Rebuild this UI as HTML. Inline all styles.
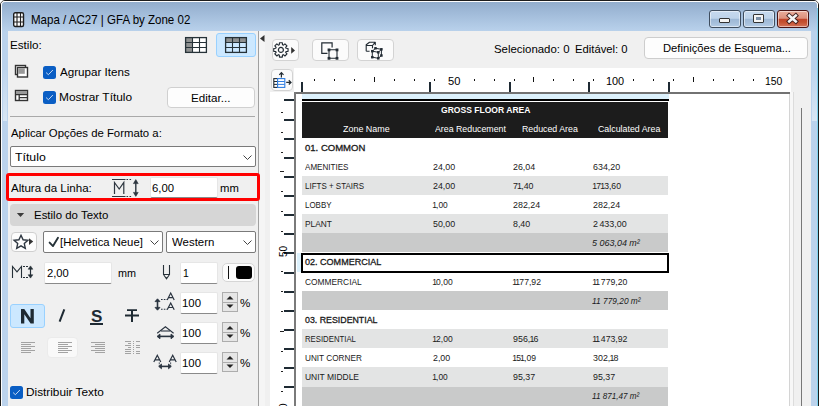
<!DOCTYPE html>
<html><head><meta charset="utf-8"><title>Mapa</title>
<style>
*{margin:0;padding:0;box-sizing:border-box}
html,body{width:819px;height:406px;overflow:hidden;background:#fff}
body{font-family:"Liberation Sans",sans-serif;position:relative}
.a{position:absolute}
.t{position:absolute;white-space:nowrap;line-height:1}
svg{overflow:visible}
</style></head><body>
<div class="a" style="left:0;top:0;width:819px;height:406px;background:#fff"></div>
<div class="a" style="left:0;top:0;width:819px;height:420px;border:1px solid #1c1c1c;border-radius:5px 5px 0 0;background:#fff;"></div>
<div class="a" style="left:1px;top:1px;width:817px;height:420px;border-radius:4px 4px 0 0;padding:1px 1px 0 1px;background:#fdfdfd"><div style="width:100%;height:100%;border-radius:3px 3px 0 0;background:linear-gradient(#92adcc 0px,#a2bcda 12px,#b2cbe6 24px,#bad2ec 30px,#bcd3ec)"></div></div>
<div class="a" style="left:812px;top:70px;width:5px;height:51px;background:linear-gradient(#bfd5ed,#d8e6f4)"></div>
<div class="a" style="left:3px;top:70px;width:4px;height:51px;background:linear-gradient(#bfd5ed,#d8e6f4)"></div>
<div class="a" style="left:817px;top:8px;width:1px;height:398px;background:#7fd3ef"></div>
<svg class="a" style="left:13px;top:12px" width="11" height="15" viewBox="0 0 11 15"><rect x="0.7" y="0.7" width="9.8" height="13.8" rx="1.5" fill="#fff" stroke="#1e1e1e" stroke-width="1.4"/><path d="M4 1v13M7.5 1v13M1 5h9M1 10h9" stroke="#1e1e1e" stroke-width="1.1"/></svg>
<div class="t" style="left:30.5px;top:12.86px;font-size:13.4px;color:#000;font-weight:normal;transform:scaleX(0.8606);transform-origin:0 0;">Mapa / AC27 | GFA by Zone 02</div>
<div class="a" style="left:709px;top:10px;width:32px;height:18px;border:1px solid #3f4d5e;border-radius:3px;background:linear-gradient(#c6d9ee,#bed3ea 46%,#9db8d6 50%,#a6bfdb 75%,#b6cde7);box-shadow:inset 0 0 0 1px rgba(255,255,255,.5)"></div>
<div class="a" style="left:743px;top:10px;width:32px;height:18px;border:1px solid #3f4d5e;border-radius:3px;background:linear-gradient(#c6d9ee,#bed3ea 46%,#9db8d6 50%,#a6bfdb 75%,#b6cde7);box-shadow:inset 0 0 0 1px rgba(255,255,255,.5)"></div>
<div class="a" style="left:777px;top:10px;width:32px;height:18px;border:1px solid #4a1414;border-radius:3px;background:linear-gradient(#e9ad9c,#dc907c 46%,#c0442a 50%,#c4502f 70%,#d4735a);box-shadow:inset 0 0 0 1px rgba(255,255,255,.5)"></div>
<div class="a" style="left:719px;top:18px;width:11px;height:5px;background:#f4f4f4;border:1px solid #333;border-radius:1px"></div>
<div class="a" style="left:753px;top:14px;width:11px;height:9px;background:#f4f4f4;border:1px solid #333;border-radius:1px"></div>
<div class="a" style="left:756px;top:17px;width:5px;height:3px;background:#7c90a8"></div>
<svg class="a" style="left:786px;top:13px" width="13" height="11" viewBox="0 0 13 11"><path d="M3.2 2.6L9.8 8.4M9.8 2.6L3.2 8.4" stroke="#3a1a1a" stroke-width="4.4" stroke-linecap="square"/><path d="M3.2 2.6L9.8 8.4M9.8 2.6L3.2 8.4" stroke="#f4f4f4" stroke-width="2.6" stroke-linecap="square"/></svg>
<div class="a" style="left:8px;top:31px;width:803px;height:380px;background:#f0f0f0"></div>
<div class="a" style="left:258px;top:31px;width:1px;height:380px;background:#a0a0a0"></div>
<div class="a" style="left:259px;top:31px;width:6px;height:380px;background:#f5f5f5"></div>
<svg class="a" style="left:260px;top:35px" width="5" height="7" viewBox="0 0 5 7"><path d="M4.5 0V7L0 3.5Z" fill="#333"/></svg>
<div class="t" style="left:9.7px;top:39.69px;font-size:11px;color:#000;font-weight:normal;transform:scaleX(1.0611);transform-origin:0 0;">Estilo:</div>
<svg class="a" style="left:185px;top:37px" width="22" height="16" viewBox="0 0 22 16"><rect x="0.5" y="0.5" width="21" height="15" fill="#fff"/><rect x="1" y="1" width="6.5" height="14" fill="#8f9191"/><path d="M7.5 1v14M14.5 1v14M1 5.5h20M1 10.5h20" stroke="#263238" stroke-width="1.1"/><rect x="0.6" y="0.6" width="20.8" height="14.8" fill="none" stroke="#263238" stroke-width="1.3"/></svg>
<div class="a" style="left:216px;top:33px;width:40px;height:24px;background:#cce8ff;border:1px solid #99d1ff;border-radius:3px"></div>
<svg class="a" style="left:225px;top:37px" width="22" height="16" viewBox="0 0 22 16"><rect x="0.5" y="0.5" width="21" height="15" fill="#cce8ff"/><rect x="1" y="1" width="20" height="4.5" fill="#8f9191"/><path d="M7.5 1v14M14.5 1v14M1 5.5h20M1 10.5h20" stroke="#263238" stroke-width="1.1"/><rect x="0.6" y="0.6" width="20.8" height="14.8" fill="none" stroke="#263238" stroke-width="1.3"/></svg>
<svg class="a" style="left:14px;top:64px" width="15" height="15" viewBox="0 0 15 15"><rect x="1.5" y="1.5" width="10" height="9" fill="#fff" stroke="#333" stroke-width="1.4"/><rect x="3.5" y="3.5" width="10" height="9.5" fill="#fff" stroke="#333" stroke-width="1.4"/><rect x="4.2" y="4.2" width="6.6" height="5.6" fill="#999"/></svg>
<svg class="a" style="left:14px;top:89px" width="15" height="13" viewBox="0 0 15 13"><rect x="1.5" y="1.5" width="12" height="10" fill="#fff" stroke="#333" stroke-width="1.4"/><rect x="2" y="2" width="11" height="3.4" fill="#999"/><path d="M1 5.6h13M5.2 6v5.5M5.2 8.6h8.5" stroke="#333" stroke-width="1.3"/></svg>
<svg class="a" style="left:43px;top:66px" width="13" height="13" viewBox="0 0 13 13"><rect x="0" y="0" width="13" height="13" rx="2.5" fill="#0a5ec4"/><path d="M3.1 6.6L5.4 8.7L9.9 4" fill="none" stroke="#e4ecf8" stroke-width="0.85"/></svg>
<div class="t" style="left:59.5px;top:66.99px;font-size:11px;color:#000;font-weight:normal;transform:scaleX(1.0568);transform-origin:0 0;">Agrupar Itens</div>
<svg class="a" style="left:43px;top:91px" width="13" height="13" viewBox="0 0 13 13"><rect x="0" y="0" width="13" height="13" rx="2.5" fill="#0a5ec4"/><path d="M3.1 6.6L5.4 8.7L9.9 4" fill="none" stroke="#e4ecf8" stroke-width="0.85"/></svg>
<div class="t" style="left:59.2px;top:91.99px;font-size:11px;color:#000;font-weight:normal;transform:scaleX(1.0805);transform-origin:0 0;">Mostrar Título</div>
<div class="a" style="left:167px;top:87px;width:88px;height:21px;background:#fdfdfd;border:1px solid #d0d0d0;border-radius:4px"></div>
<div class="t" style="left:190.8px;top:92.69px;font-size:11px;color:#000;font-weight:normal;transform:scaleX(1.0564);transform-origin:0 0;">Editar...</div>
<div class="a" style="left:10px;top:116px;width:245px;height:1px;background:#a9a9a9"></div>
<div class="t" style="left:10.5px;top:127.69px;font-size:11px;color:#000;font-weight:normal;transform:scaleX(1.0320);transform-origin:0 0;">Aplicar Opções de Formato a:</div>
<div class="a" style="left:10px;top:146px;width:246px;height:21px;background:#fff;border:1px solid #7a7a7a;border-radius:2px"></div>
<svg class="a" style="left:243px;top:155px" width="9" height="5" viewBox="0 0 9 5"><path d="M0.5 0.5L4.5 4.5L8.5 0.5" fill="none" stroke="#444" stroke-width="1"/></svg>
<div class="t" style="left:15px;top:151.99px;font-size:11px;color:#000;font-weight:normal;transform:scaleX(1.1194);transform-origin:0 0;">Título</div>
<div class="a" style="left:6px;top:173px;width:254px;height:28px;border:3px solid #f00;border-radius:3px"></div>
<div class="t" style="left:10.5px;top:182.69px;font-size:11px;color:#000;font-weight:normal;transform:scaleX(1.0485);transform-origin:0 0;">Altura da Linha:</div>
<svg class="a" style="left:111px;top:178px" width="28" height="20" viewBox="0 0 28 20"><path d="M1 1.5h13.5M1 18.5h13.5" stroke="#2d3640" stroke-width="1"/><path d="M15.5 1.5h6M15.5 18.5h6" stroke="#2d3640" stroke-width="1" stroke-dasharray="1.6 1.4"/><path d="M3.5 16V4.5L8.2 11L12.8 4.5V16" fill="none" stroke="#2d3640" stroke-width="1.2"/><path d="M24.8 4V16" stroke="#2d3640" stroke-width="1.4"/><path d="M22.4 5.6L24.8 1.6L27.2 5.6ZM22.4 14.4L24.8 18.4L27.2 14.4Z" fill="#2d3640" stroke="#2d3640" stroke-width="0.6" stroke-linejoin="round"/></svg>
<div class="a" style="left:150px;top:177px;width:68px;height:21px;background:#fff;border:1px solid #e6e6e6;border-bottom:1px solid #8a8a8a;border-radius:2px"></div>
<div class="t" style="left:151.8px;top:182.69px;font-size:11px;color:#000;font-weight:normal;transform:scaleX(1.0317);transform-origin:0 0;">6,00</div>
<div class="t" style="left:220px;top:182.69px;font-size:11px;color:#000;font-weight:normal;transform:scaleX(1.0257);transform-origin:0 0;">mm</div>
<div class="a" style="left:10px;top:204px;width:246px;height:22px;background:#d6d6d6;border-radius:4px"></div>
<svg class="a" style="left:16px;top:212px" width="9" height="6" viewBox="0 0 9 6"><path d="M0.8 1H8.2L4.5 5Z" fill="#3c3c3c"/></svg>
<div class="t" style="left:33.8px;top:210.39px;font-size:11px;color:#000;font-weight:normal;transform:scaleX(1.0414);transform-origin:0 0;">Estilo do Texto</div>
<div class="a" style="left:11px;top:232px;width:26px;height:20px;background:#fcfcfc;border:1px solid #cfcfcf;border-radius:4px"></div>
<svg class="a" style="left:13px;top:234px" width="22" height="16" viewBox="0 0 22 16"><path d="M8 1.3L10.1 5.8L14.9 6.3L11.3 9.6L12.3 14.4L8 11.9L3.7 14.4L4.7 9.6L1.1 6.3L5.9 5.8Z" fill="none" stroke="#2d3640" stroke-width="1.4" stroke-linejoin="miter"/><path d="M16 4.2L20.2 7.6L16 11Z" fill="#333"/></svg>
<div class="a" style="left:43px;top:231px;width:120px;height:22px;background:#fff;border:1px solid #7a7a7a;border-radius:2px"></div>
<svg class="a" style="left:150px;top:240px" width="9" height="5" viewBox="0 0 9 5"><path d="M0.5 0.5L4.5 4.5L8.5 0.5" fill="none" stroke="#444" stroke-width="1"/></svg>
<svg class="a" style="left:48px;top:237px" width="11" height="11" viewBox="0 0 11 11"><path d="M1.6 5.6L5 9.1L10 0.8" fill="none" stroke="#263238" stroke-width="1.9" stroke-linecap="round" stroke-linejoin="round"/></svg>
<div class="t" style="left:59.8px;top:237.29px;font-size:11px;color:#000;font-weight:normal;transform:scaleX(1.0258);transform-origin:0 0;">[Helvetica Neue]</div>
<div class="a" style="left:166px;top:231px;width:90px;height:22px;background:#fff;border:1px solid #7a7a7a;border-radius:2px"></div>
<svg class="a" style="left:243px;top:240px" width="9" height="5" viewBox="0 0 9 5"><path d="M0.5 0.5L4.5 4.5L8.5 0.5" fill="none" stroke="#444" stroke-width="1"/></svg>
<div class="t" style="left:171.6px;top:237.19px;font-size:11px;color:#000;font-weight:normal;transform:scaleX(1.0401);transform-origin:0 0;">Western</div>
<svg class="a" style="left:11px;top:264px" width="24" height="16" viewBox="0 0 24 16"><path d="M1.5 14V2.4L6 7.8L10.5 2.4V14" fill="none" stroke="#263038" stroke-width="1.1"/><path d="M12 2.5h5M12 13.5h5" stroke="#263038" stroke-width="1" stroke-dasharray="2 1"/><path d="M19.5 4.5V11.5" stroke="#263038" stroke-width="1.2"/><path d="M17.2 5.2L19.5 1.9L21.8 5.2ZM17.2 10.8L19.5 14.1L21.8 10.8Z" fill="#263038" stroke="#263038" stroke-width="0.6" stroke-linejoin="round"/></svg>
<div class="a" style="left:44px;top:262px;width:68px;height:22px;background:#fff;border:1px solid #e6e6e6;border-bottom:1px solid #8a8a8a;border-radius:2px"></div>
<div class="t" style="left:46.8px;top:267.89px;font-size:11px;color:#000;font-weight:normal;transform:scaleX(1.0177);transform-origin:0 0;">2,00</div>
<div class="t" style="left:117.8px;top:267.89px;font-size:11px;color:#000;font-weight:normal;transform:scaleX(0.9821);transform-origin:0 0;">mm</div>
<svg class="a" style="left:162px;top:264px" width="10" height="16" viewBox="0 0 10 16"><path d="M1.5 1V10.5M7.5 1V10.5M1 10.5H8" fill="none" stroke="#263038" stroke-width="1.1"/><path d="M1.8 11L4.5 14.8L7.2 11" fill="none" stroke="#263038" stroke-width="1.1"/><path d="M3.6 13.2L4.5 14.8L5.4 13.2Z" fill="#263038"/></svg>
<div class="a" style="left:180px;top:262px;width:38px;height:22px;background:#fff;border:1px solid #e6e6e6;border-bottom:1px solid #8a8a8a;border-radius:2px"></div>
<div class="t" style="left:182.6px;top:267.89px;font-size:11px;color:#000;font-weight:normal;transform:scaleX(0.9469);transform-origin:0 0;">1</div>
<div class="a" style="left:222px;top:263px;width:33px;height:19px;background:#fcfcfc;border:1px solid #d6d6d6;border-radius:5px"></div>
<div class="a" style="left:228px;top:266px;width:1px;height:13px;background:#111"></div>
<div class="a" style="left:236px;top:266px;width:16px;height:13px;background:#000;border-radius:3px"></div>
<div class="a" style="left:10px;top:304px;width:35px;height:24px;background:#cce8ff;border:1px solid #99d1ff;border-radius:3px"></div>
<svg class="a" style="left:20.8px;top:308.5px" width="13" height="15" viewBox="0 0 13 15"><path d="M0 14.5V0H3.3L9.5 9.3V0H12.8V14.5H9.6L3.3 5.2V14.5Z" fill="#1e2a33"/></svg>
<svg class="a" style="left:58px;top:309px" width="8" height="13" viewBox="0 0 8 13"><path d="M6.3 0.3L1.6 12.7" stroke="#1e2a33" stroke-width="2"/></svg>
<div class="t" style="left:90.6px;top:307.63px;font-size:16.5px;color:#1e2a33;font-weight:bold;transform:scaleX(1.0349);transform-origin:0 0;">S</div>
<div class="a" style="left:90px;top:323px;width:13px;height:1.6px;background:#1e2a33"></div>
<svg class="a" style="left:124px;top:308px" width="16" height="15" viewBox="0 0 16 15"><path d="M1 7.5h14M3 2.2h10" stroke="#1e2a33" stroke-width="1.8"/><path d="M8 2V14" stroke="#1e2a33" stroke-width="2"/></svg>
<div class="a" style="left:21px;top:342px;width:14px;height:1px;background:#a3a3a3"></div>
<div class="a" style="left:21px;top:344px;width:10px;height:1px;background:#a3a3a3"></div>
<div class="a" style="left:21px;top:346px;width:14px;height:1px;background:#a3a3a3"></div>
<div class="a" style="left:21px;top:348px;width:10px;height:1px;background:#a3a3a3"></div>
<div class="a" style="left:21px;top:350px;width:14px;height:1px;background:#a3a3a3"></div>
<div class="a" style="left:21px;top:352px;width:10px;height:1px;background:#a3a3a3"></div>
<div class="a" style="left:47px;top:337px;width:31px;height:21px;background:#f9f9f9;border:1px solid #ebebeb;border-radius:4px"></div>
<div class="a" style="left:58px;top:342px;width:14px;height:1px;background:#a3a3a3"></div>
<div class="a" style="left:58px;top:344px;width:10px;height:1px;background:#a3a3a3"></div>
<div class="a" style="left:58px;top:346px;width:14px;height:1px;background:#a3a3a3"></div>
<div class="a" style="left:58px;top:348px;width:10px;height:1px;background:#a3a3a3"></div>
<div class="a" style="left:58px;top:350px;width:14px;height:1px;background:#a3a3a3"></div>
<div class="a" style="left:58px;top:352px;width:10px;height:1px;background:#a3a3a3"></div>
<div class="a" style="left:91px;top:342px;width:14px;height:1px;background:#a3a3a3"></div>
<div class="a" style="left:95px;top:344px;width:10px;height:1px;background:#a3a3a3"></div>
<div class="a" style="left:91px;top:346px;width:14px;height:1px;background:#a3a3a3"></div>
<div class="a" style="left:95px;top:348px;width:10px;height:1px;background:#a3a3a3"></div>
<div class="a" style="left:91px;top:350px;width:14px;height:1px;background:#a3a3a3"></div>
<div class="a" style="left:95px;top:352px;width:10px;height:1px;background:#a3a3a3"></div>
<div class="a" style="left:125px;top:341px;width:6px;height:1px;background:#a3a3a3"></div>
<div class="a" style="left:133px;top:341px;width:1px;height:1px;background:#a3a3a3"></div>
<div class="a" style="left:136px;top:341px;width:4px;height:1px;background:#a3a3a3"></div>
<div class="a" style="left:128px;top:343px;width:3px;height:1px;background:#a3a3a3"></div>
<div class="a" style="left:133px;top:343px;width:1px;height:1px;background:#a3a3a3"></div>
<div class="a" style="left:125px;top:345px;width:6px;height:1px;background:#a3a3a3"></div>
<div class="a" style="left:133px;top:345px;width:1px;height:1px;background:#a3a3a3"></div>
<div class="a" style="left:136px;top:345px;width:4px;height:1px;background:#a3a3a3"></div>
<div class="a" style="left:128px;top:347px;width:3px;height:1px;background:#a3a3a3"></div>
<div class="a" style="left:133px;top:347px;width:1px;height:1px;background:#a3a3a3"></div>
<div class="a" style="left:136px;top:347px;width:4px;height:1px;background:#a3a3a3"></div>
<div class="a" style="left:125px;top:349px;width:6px;height:1px;background:#a3a3a3"></div>
<div class="a" style="left:133px;top:349px;width:1px;height:1px;background:#a3a3a3"></div>
<div class="a" style="left:125px;top:351px;width:6px;height:1px;background:#a3a3a3"></div>
<div class="a" style="left:133px;top:351px;width:1px;height:1px;background:#a3a3a3"></div>
<div class="a" style="left:136px;top:351px;width:4px;height:1px;background:#a3a3a3"></div>
<div class="a" style="left:125px;top:353px;width:6px;height:1px;background:#a3a3a3"></div>
<div class="a" style="left:133px;top:353px;width:1px;height:1px;background:#a3a3a3"></div>
<div class="a" style="left:136px;top:353px;width:4px;height:1px;background:#a3a3a3"></div>
<div class="a" style="left:180px;top:292px;width:38px;height:22px;background:#fff;border:1px solid #e6e6e6;border-bottom:1px solid #8a8a8a;border-radius:2px"></div>
<div class="t" style="left:182.3px;top:298.19px;font-size:11px;color:#000;font-weight:normal;transform:scaleX(1.0349);transform-origin:0 0;">100</div>
<div class="a" style="left:222px;top:292px;width:16px;height:20px;background:#e6e6e6;border:1px solid #adadad"></div>
<div class="a" style="left:223px;top:301.5px;width:14px;height:1px;background:#adadad"></div>
<svg class="a" style="left:226px;top:295px" width="8" height="14" viewBox="0 0 8 14"><path d="M0.5 4.5L4 1L7.5 4.5Z" fill="#222"/><path d="M0.5 9.5L4 13L7.5 9.5Z" fill="#222"/></svg>
<div class="t" style="left:239.5px;top:298.19px;font-size:11px;color:#000;font-weight:normal;transform:scaleX(1.0530);transform-origin:0 0;">%</div>
<div class="a" style="left:180px;top:322px;width:38px;height:22px;background:#fff;border:1px solid #e6e6e6;border-bottom:1px solid #8a8a8a;border-radius:2px"></div>
<div class="t" style="left:182.3px;top:328.19px;font-size:11px;color:#000;font-weight:normal;transform:scaleX(1.0349);transform-origin:0 0;">100</div>
<div class="a" style="left:222px;top:322px;width:16px;height:20px;background:#e6e6e6;border:1px solid #adadad"></div>
<div class="a" style="left:223px;top:331.5px;width:14px;height:1px;background:#adadad"></div>
<svg class="a" style="left:226px;top:325px" width="8" height="14" viewBox="0 0 8 14"><path d="M0.5 4.5L4 1L7.5 4.5Z" fill="#222"/><path d="M0.5 9.5L4 13L7.5 9.5Z" fill="#222"/></svg>
<div class="t" style="left:239.5px;top:328.19px;font-size:11px;color:#000;font-weight:normal;transform:scaleX(1.0530);transform-origin:0 0;">%</div>
<div class="a" style="left:180px;top:352px;width:38px;height:22px;background:#fff;border:1px solid #e6e6e6;border-bottom:1px solid #8a8a8a;border-radius:2px"></div>
<div class="t" style="left:182.3px;top:358.19px;font-size:11px;color:#000;font-weight:normal;transform:scaleX(1.0349);transform-origin:0 0;">100</div>
<div class="a" style="left:222px;top:352px;width:16px;height:20px;background:#e6e6e6;border:1px solid #adadad"></div>
<div class="a" style="left:223px;top:361.5px;width:14px;height:1px;background:#adadad"></div>
<svg class="a" style="left:226px;top:355px" width="8" height="14" viewBox="0 0 8 14"><path d="M0.5 4.5L4 1L7.5 4.5Z" fill="#222"/><path d="M0.5 9.5L4 13L7.5 9.5Z" fill="#222"/></svg>
<div class="t" style="left:239.5px;top:358.19px;font-size:11px;color:#000;font-weight:normal;transform:scaleX(1.0530);transform-origin:0 0;">%</div>
<svg class="a" style="left:150px;top:288px" width="30" height="26" viewBox="0 0 30 26"><path d="M7.5 12.2V20.8" stroke="#2a3440" stroke-width="1.6"/><path d="M5 13.6L7.5 10.8L10 13.6ZM5 19.4L7.5 22.2L10 19.4Z" fill="#2a3440" stroke="#2a3440" stroke-width="0.8"/><path d="M11 11.5h6M11 21.3h6" stroke="#2a3440" stroke-width="1.1" stroke-dasharray="1.6 1.2"/><path d="M17.2 11.899999999999999L20.7 5.1L24.2 11.899999999999999M18.599999999999998 9.6H22.799999999999997" fill="none" stroke="#2a3440" stroke-width="1.2"/><path d="M17.2 21.8L20.7 15L24.2 21.8M18.599999999999998 19.5H22.799999999999997" fill="none" stroke="#2a3440" stroke-width="1.2"/></svg>
<svg class="a" style="left:150px;top:320px" width="30" height="24" viewBox="0 0 30 24"><path d="M7.2 13.3L15.4 6.8L23.6 13.3" fill="none" stroke="#2a3440" stroke-width="1.1"/><path d="M11 11h9" stroke="#2a3440" stroke-width="1.1"/><path d="M8.5 16.4H22.5" stroke="#2a3440" stroke-width="1.6"/><path d="M10 14L7 16.4L10 18.8ZM21 14L24 16.4L21 18.8Z" fill="#2a3440" stroke="#2a3440" stroke-width="0.8"/></svg>
<svg class="a" style="left:150px;top:350px" width="30" height="22" viewBox="0 0 30 22"><path d="M3.8 12.1L7.3 5.3L10.8 12.1M5.199999999999999 9.8H9.399999999999999" fill="none" stroke="#2a3440" stroke-width="1.2"/><path d="M19.2 12.1L22.7 5.3L26.2 12.1M20.599999999999998 9.8H24.799999999999997" fill="none" stroke="#2a3440" stroke-width="1.2"/><path d="M9.3 12.5v3M20.6 12.5v3" stroke="#2a3440" stroke-width="1.1" stroke-dasharray="1.2 1"/><path d="M10 16.4H20" stroke="#2a3440" stroke-width="1.6"/><path d="M11.5 14L8.7 16.4L11.5 18.8ZM18.5 14L21.3 16.4L18.5 18.8Z" fill="#2a3440" stroke="#2a3440" stroke-width="0.8"/></svg>
<svg class="a" style="left:10px;top:386px" width="13" height="13" viewBox="0 0 13 13"><rect x="0" y="0" width="13" height="13" rx="2.5" fill="#0a5ec4"/><path d="M3.1 6.6L5.4 8.7L9.9 4" fill="none" stroke="#e4ecf8" stroke-width="0.85"/></svg>
<div class="t" style="left:26.2px;top:386.89px;font-size:11px;color:#000;font-weight:normal;transform:scaleX(1.0724);transform-origin:0 0;">Distribuir Texto</div>
<div class="a" style="left:271.5px;top:39.4px;width:27px;height:22px;background:#fbfbfb;border:1px solid #d3d3d3;border-radius:4px"></div>
<svg class="a" style="left:273px;top:42px" width="24" height="16" viewBox="0 0 24 16"><g transform="translate(7.9 7.9)"><path d="M5.16 -1.60 L7.15 -1.45 L7.15 1.45 L5.16 1.60 L4.78 2.52 L6.08 4.03 L4.03 6.08 L2.52 4.78 L1.60 5.16 L1.45 7.15 L-1.45 7.15 L-1.60 5.16 L-2.52 4.78 L-4.03 6.08 L-6.08 4.03 L-4.78 2.52 L-5.16 1.60 L-7.15 1.45 L-7.15 -1.45 L-5.16 -1.60 L-4.78 -2.52 L-6.08 -4.03 L-4.03 -6.08 L-2.52 -4.78 L-1.60 -5.16 L-1.45 -7.15 L1.45 -7.15 L1.60 -5.16 L2.52 -4.78 L4.03 -6.08 L6.08 -4.03 L4.78 -2.52Z" fill="none" stroke="#222b33" stroke-width="1.15" stroke-linejoin="round"/><circle r="2.5" fill="none" stroke="#222b33" stroke-width="1.2"/></g><path d="M18.2 5L22 8.4L18.2 11.8Z" fill="#333"/></svg>
<div class="a" style="left:311.5px;top:39.3px;width:37px;height:22px;background:#fbfbfb;border:1px solid #d3d3d3;border-radius:4px"></div>
<svg class="a" style="left:311.5px;top:39.3px" width="37" height="22" viewBox="0 0 37 22"><path d="M15.5 14.3H9.8V3.8H20.1V8.5" fill="none" stroke="#222b33" stroke-width="1.2"/><path d="M17 10.8H25M17 19.2H25M17 10.8V19.2M25 10.8V19.2" stroke="#222b33" stroke-width="1.1"/><g fill="#222b33"><rect x="15.6" y="9.5" width="2.8" height="2.8"/><rect x="23.6" y="9.5" width="2.8" height="2.8"/><rect x="15.6" y="17.9" width="2.8" height="2.8"/><rect x="23.6" y="17.9" width="2.8" height="2.8"/></g></svg>
<div class="a" style="left:357px;top:39.3px;width:36.5px;height:22px;background:#fbfbfb;border:1px solid #d3d3d3;border-radius:4px"></div>
<svg class="a" style="left:362px;top:39px" width="26" height="23" viewBox="0 0 26 23"><path d="M4.2 12.2V5.7L7.5 3.2H13.3L10.5 6.5H4.2M10.5 6.5V9.3M13.3 3.6V6.2M4.2 12.2H7.6" fill="none" stroke="#222b33" stroke-width="1.1" stroke-linejoin="round"/><path d="M10.3 12.2L16.3 13.3L19.4 10.3L13.5 9.3ZM10.3 12.2V18.2L16.3 19.3L19.4 16.5V10.3M16.3 13.3V19.3" fill="none" stroke="#222b33" stroke-width="1"/><g fill="#222b33"><rect x="12.25" y="8.05" width="2.5" height="2.5"/><rect x="18.15" y="9.05" width="2.5" height="2.5"/><rect x="9.05" y="10.95" width="2.5" height="2.5"/><rect x="15.05" y="12.05" width="2.5" height="2.5"/><rect x="18.15" y="15.25" width="2.5" height="2.5"/><rect x="9.05" y="16.95" width="2.5" height="2.5"/><rect x="15.05" y="18.05" width="2.5" height="2.5"/></g></svg>
<div class="t" style="left:494.3px;top:44.39px;font-size:11px;color:#000;font-weight:normal;transform:scaleX(1.0374);transform-origin:0 0;">Selecionado: 0</div>
<div class="t" style="left:575px;top:44.39px;font-size:11px;color:#000;font-weight:normal;transform:scaleX(1.0238);transform-origin:0 0;">Editável: 0</div>
<div class="a" style="left:644px;top:37px;width:164px;height:22px;background:#fdfdfd;border:1px solid #cdcdcd;border-radius:4px"></div>
<div class="t" style="left:662.5px;top:42.59px;font-size:11px;color:#000;font-weight:normal;transform:scaleX(1.0211);transform-origin:0 0;">Definições de Esquema...</div>
<div class="a" style="left:294px;top:68px;width:497px;height:25px;background:#fff"></div>
<div class="a" style="left:270px;top:92px;width:25px;height:320px;background:#fff"></div>
<div class="a" style="left:271.4px;top:69.2px;width:21.2px;height:21.8px;background:#fbfbfb;border:1px solid #d3d3d3;border-radius:4px"></div>
<svg class="a" style="left:268px;top:66px" width="28" height="28" viewBox="0 0 28 28"><path d="M13.4 11.5V6.8M11.3 8.8L13.4 6.6L15.5 8.8" fill="none" stroke="#222b33" stroke-width="1.2"/><rect x="5.8" y="12.6" width="4" height="8.8" fill="#fff" stroke="#222b33" stroke-width="1.1"/><path d="M6 15.5H9.6M6 18.4H9.6" stroke="#222b33" stroke-width="1"/><rect x="9.6" y="12.6" width="7.2" height="8.8" fill="#fff" stroke="#2f7de1" stroke-width="1.1"/><path d="M9.8 15.5H16.6M9.8 18.4H16.6" stroke="#2f7de1" stroke-width="1"/><path d="M18.2 16.4H22.8M20.8 14.3L23 16.4L20.8 18.5" fill="none" stroke="#222b33" stroke-width="1.2"/></svg>
<div class="a" style="left:314px;top:79px;width:1px;height:2px;background:#111"></div>
<div class="a" style="left:334px;top:79px;width:1px;height:2px;background:#111"></div>
<div class="a" style="left:354px;top:79px;width:1px;height:2px;background:#111"></div>
<div class="a" style="left:374px;top:77px;width:1px;height:5px;background:#111"></div>
<div class="a" style="left:394px;top:79px;width:1px;height:2px;background:#111"></div>
<div class="a" style="left:414px;top:79px;width:1px;height:2px;background:#111"></div>
<div class="a" style="left:434px;top:79px;width:1px;height:2px;background:#111"></div>
<div class="a" style="left:474px;top:79px;width:1px;height:2px;background:#111"></div>
<div class="a" style="left:494px;top:79px;width:1px;height:2px;background:#111"></div>
<div class="a" style="left:514px;top:79px;width:1px;height:2px;background:#111"></div>
<div class="a" style="left:533px;top:77px;width:1px;height:5px;background:#111"></div>
<div class="a" style="left:553px;top:79px;width:1px;height:2px;background:#111"></div>
<div class="a" style="left:573px;top:79px;width:1px;height:2px;background:#111"></div>
<div class="a" style="left:593px;top:79px;width:1px;height:2px;background:#111"></div>
<div class="a" style="left:633px;top:79px;width:1px;height:2px;background:#111"></div>
<div class="a" style="left:653px;top:79px;width:1px;height:2px;background:#111"></div>
<div class="a" style="left:673px;top:79px;width:1px;height:2px;background:#111"></div>
<div class="a" style="left:693px;top:77px;width:1px;height:5px;background:#111"></div>
<div class="a" style="left:713px;top:79px;width:1px;height:2px;background:#111"></div>
<div class="a" style="left:733px;top:79px;width:1px;height:2px;background:#111"></div>
<div class="a" style="left:753px;top:79px;width:1px;height:2px;background:#111"></div>
<div class="t" style="left:448.4px;top:75.91px;font-size:10.5px;color:#000;font-weight:normal;transform:scaleX(1.0610);transform-origin:0 0;">50</div>
<div class="t" style="left:605.5999999999999px;top:75.91px;font-size:10.5px;color:#000;font-weight:normal;transform:scaleX(1.0381);transform-origin:0 0;">100</div>
<div class="t" style="left:765.0px;top:75.91px;font-size:10.5px;color:#000;font-weight:normal;transform:scaleX(0.9925);transform-origin:0 0;">150</div>
<div class="a" style="left:301px;top:82px;width:2px;height:10px;background:#1e2a33"></div>
<div class="a" style="left:429px;top:82px;width:2px;height:10px;background:#1e2a33"></div>
<div class="a" style="left:509px;top:82px;width:2px;height:10px;background:#1e2a33"></div>
<div class="a" style="left:588px;top:82px;width:2px;height:10px;background:#1e2a33"></div>
<div class="a" style="left:668px;top:82px;width:2px;height:10px;background:#1e2a33"></div>
<div class="a" style="left:789px;top:92px;width:1px;height:320px;background:#d4d4d4"></div>
<div class="a" style="left:793px;top:92px;width:1px;height:320px;background:#dcdcdc"></div>
<div class="a" style="left:790px;top:92px;width:3px;height:320px;background:#f7f7f7"></div>
<div class="a" style="left:801px;top:108px;width:1px;height:300px;background:#777"></div>
<div class="a" style="left:294px;top:92px;width:496px;height:2px;background:#727272"></div>
<div class="a" style="left:296px;top:94px;width:493px;height:320px;background:#fff"></div>
<div class="a" style="left:294px;top:92px;width:2px;height:320px;background:#7a7a7a"></div>
<div class="a" style="left:284px;top:99px;width:10px;height:2px;background:#1e2a33"></div>
<div class="a" style="left:284px;top:119px;width:10px;height:2px;background:#1e2a33"></div>
<div class="a" style="left:284px;top:138px;width:10px;height:2px;background:#1e2a33"></div>
<div class="a" style="left:284px;top:157px;width:10px;height:2px;background:#1e2a33"></div>
<div class="a" style="left:284px;top:176px;width:10px;height:2px;background:#1e2a33"></div>
<div class="a" style="left:284px;top:195px;width:10px;height:2px;background:#1e2a33"></div>
<div class="a" style="left:284px;top:214px;width:10px;height:2px;background:#1e2a33"></div>
<div class="a" style="left:284px;top:233px;width:10px;height:2px;background:#1e2a33"></div>
<div class="a" style="left:284px;top:252px;width:10px;height:2px;background:#1e2a33"></div>
<div class="a" style="left:284px;top:272px;width:10px;height:2px;background:#1e2a33"></div>
<div class="a" style="left:284px;top:291px;width:10px;height:2px;background:#1e2a33"></div>
<div class="a" style="left:284px;top:310px;width:10px;height:2px;background:#1e2a33"></div>
<div class="a" style="left:284px;top:329px;width:10px;height:2px;background:#1e2a33"></div>
<div class="a" style="left:284px;top:348px;width:10px;height:2px;background:#1e2a33"></div>
<div class="a" style="left:284px;top:367px;width:10px;height:2px;background:#1e2a33"></div>
<div class="a" style="left:284px;top:386px;width:10px;height:2px;background:#1e2a33"></div>
<div class="a" style="left:281px;top:112px;width:2px;height:1px;background:#222"></div>
<div class="a" style="left:281px;top:132px;width:2px;height:1px;background:#222"></div>
<div class="a" style="left:281px;top:152px;width:2px;height:1px;background:#222"></div>
<div class="a" style="left:280px;top:171px;width:4px;height:1px;background:#222"></div>
<div class="a" style="left:281px;top:191px;width:2px;height:1px;background:#222"></div>
<div class="a" style="left:281px;top:211px;width:2px;height:1px;background:#222"></div>
<div class="a" style="left:281px;top:231px;width:2px;height:1px;background:#222"></div>
<div class="a" style="left:281px;top:271px;width:2px;height:1px;background:#222"></div>
<div class="a" style="left:281px;top:291px;width:2px;height:1px;background:#222"></div>
<div class="a" style="left:281px;top:311px;width:2px;height:1px;background:#222"></div>
<div class="a" style="left:280px;top:331px;width:4px;height:1px;background:#222"></div>
<div class="a" style="left:281px;top:351px;width:2px;height:1px;background:#222"></div>
<div class="a" style="left:281px;top:371px;width:2px;height:1px;background:#222"></div>
<div class="a" style="left:281px;top:391px;width:2px;height:1px;background:#222"></div>
<div class="a" style="left:302px;top:94px;width:367px;height:4.5px;background:#dcf1fc"></div>
<div class="a" style="left:302px;top:99px;width:367px;height:2px;background:#000"></div>
<div class="a" style="left:302px;top:102px;width:366px;height:36px;background:#1c1c1c"></div>
<div class="t" style="left:441px;top:104.84px;font-size:9.4px;color:#fff;font-weight:bold;transform:scaleX(0.9124);transform-origin:0 0;">GROSS FLOOR AREA</div>
<div class="t" style="left:342.7px;top:123.74px;font-size:9.4px;color:#fff;font-weight:normal;transform:scaleX(0.9534);transform-origin:0 0;">Zone Name</div>
<div class="t" style="left:434.5px;top:123.74px;font-size:9.4px;color:#fff;font-weight:normal;transform:scaleX(0.9381);transform-origin:0 0;">Area Reducement</div>
<div class="t" style="left:521.5px;top:123.74px;font-size:9.4px;color:#fff;font-weight:normal;transform:scaleX(0.9390);transform-origin:0 0;">Reduced Area</div>
<div class="t" style="left:597.8px;top:123.74px;font-size:9.4px;color:#fff;font-weight:normal;transform:scaleX(0.9413);transform-origin:0 0;">Calculated Area</div>
<div class="t" style="left:304.8px;top:142.94px;font-size:9.4px;color:#1a1a1a;font-weight:normal;transform:scaleX(1.0153);transform-origin:0 0;-webkit-text-stroke:0.3px #1a1a1a">01. COMMON</div>
<div class="t" style="left:304.8px;top:161.94px;font-size:9.4px;color:#1a1a1a;font-weight:normal;transform:scaleX(0.8609);transform-origin:0 0;">AMENITIES</div>
<div class="t" style="left:432.9px;top:161.94px;font-size:9.4px;color:#1a1a1a;font-weight:normal;transform:scaleX(0.9459);transform-origin:0 0;">24,00</div>
<div class="t" style="left:512.5px;top:161.94px;font-size:9.4px;color:#1a1a1a;font-weight:normal;transform:scaleX(0.9459);transform-origin:0 0;">26,04</div>
<div class="t" style="left:592.5px;top:161.94px;font-size:9.4px;color:#1a1a1a;font-weight:normal;transform:scaleX(0.9481);transform-origin:0 0;">634,20</div>
<div class="a" style="left:302px;top:176px;width:366px;height:19px;background:#e3e4e4"></div>
<div class="t" style="left:304.8px;top:180.94px;font-size:9.4px;color:#1a1a1a;font-weight:normal;transform:scaleX(0.8519);transform-origin:0 0;">LIFTS + STAIRS</div>
<div class="t" style="left:432.9px;top:180.94px;font-size:9.4px;color:#1a1a1a;font-weight:normal;transform:scaleX(0.9459);transform-origin:0 0;">24,00</div>
<div class="t" style="left:512.5px;top:180.94px;font-size:9.4px;color:#1a1a1a;font-weight:normal;transform:scaleX(0.9446);transform-origin:0 0;">7<span style="margin:0 -0.9px">1</span>,40</div>
<div class="t" style="left:592.5px;top:180.94px;font-size:9.4px;color:#1a1a1a;font-weight:normal;transform:scaleX(0.9221);transform-origin:0 0;"><span style="margin:0 -0.9px">1</span>7<span style="margin:0 -0.9px">1</span>3,60</div>
<div class="t" style="left:304.8px;top:199.94px;font-size:9.4px;color:#1a1a1a;font-weight:normal;transform:scaleX(0.8476);transform-origin:0 0;">LOBBY</div>
<div class="t" style="left:432.9px;top:199.94px;font-size:9.4px;color:#1a1a1a;font-weight:normal;transform:scaleX(0.8921);transform-origin:0 0;"><span style="margin:0 -0.9px">1</span>,00</div>
<div class="t" style="left:512.5px;top:199.94px;font-size:9.4px;color:#1a1a1a;font-weight:normal;transform:scaleX(0.9481);transform-origin:0 0;">282,24</div>
<div class="t" style="left:592.5px;top:199.94px;font-size:9.4px;color:#1a1a1a;font-weight:normal;transform:scaleX(0.9481);transform-origin:0 0;">282,24</div>
<div class="a" style="left:302px;top:214px;width:366px;height:19px;background:#e3e4e4"></div>
<div class="t" style="left:304.8px;top:218.94px;font-size:9.4px;color:#1a1a1a;font-weight:normal;transform:scaleX(0.8900);transform-origin:0 0;">PLANT</div>
<div class="t" style="left:432.9px;top:218.94px;font-size:9.4px;color:#1a1a1a;font-weight:normal;transform:scaleX(0.9459);transform-origin:0 0;">50,00</div>
<div class="t" style="left:512.5px;top:218.94px;font-size:9.4px;color:#1a1a1a;font-weight:normal;transform:scaleX(0.9425);transform-origin:0 0;">8,40</div>
<div class="t" style="left:592.5px;top:218.94px;font-size:9.4px;color:#1a1a1a;font-weight:normal;transform:scaleX(0.9514);transform-origin:0 0;">2<span style="margin-right:-1.1px"> </span>433,00</div>
<div class="a" style="left:302px;top:233px;width:366px;height:19px;background:#c9caca"></div>
<div class="t" style="left:592.2px;top:237.94px;font-size:9.4px;color:#1a1a1a;font-weight:normal;transform:scaleX(0.9554);transform-origin:0 0;font-style:italic">5 063,04 m²</div>
<div class="a" style="left:301px;top:253px;width:368px;height:20px;border:2px solid #000"></div>
<div class="a" style="left:297px;top:253px;width:4px;height:19px;background:#dcf1fc"></div>
<div class="t" style="left:304.8px;top:256.94px;font-size:9.4px;color:#1a1a1a;font-weight:normal;transform:scaleX(0.9635);transform-origin:0 0;-webkit-text-stroke:0.3px #1a1a1a">02. COMMERCIAL</div>
<div class="t" style="left:304.8px;top:276.94px;font-size:9.4px;color:#1a1a1a;font-weight:normal;transform:scaleX(0.8923);transform-origin:0 0;">COMMERCIAL</div>
<div class="t" style="left:432.9px;top:276.94px;font-size:9.4px;color:#1a1a1a;font-weight:normal;transform:scaleX(0.9080);transform-origin:0 0;"><span style="margin:0 -0.9px">1</span>0,00</div>
<div class="t" style="left:512.5px;top:276.94px;font-size:9.4px;color:#1a1a1a;font-weight:normal;transform:scaleX(0.9221);transform-origin:0 0;"><span style="margin:0 -0.9px">1</span><span style="margin:0 -0.9px">1</span>77,92</div>
<div class="t" style="left:592.5px;top:276.94px;font-size:9.4px;color:#1a1a1a;font-weight:normal;transform:scaleX(0.9297);transform-origin:0 0;"><span style="margin:0 -0.9px">1</span><span style="margin:0 -0.9px">1</span><span style="margin-right:-1.1px"> </span>779,20</div>
<div class="a" style="left:302px;top:291px;width:366px;height:19px;background:#c9caca"></div>
<div class="t" style="left:592.2px;top:295.94px;font-size:9.4px;color:#1a1a1a;font-weight:normal;transform:scaleX(0.8910);transform-origin:0 0;font-style:italic">11 779,20 m²</div>
<div class="t" style="left:304.8px;top:314.94px;font-size:9.4px;color:#1a1a1a;font-weight:normal;transform:scaleX(0.9400);transform-origin:0 0;-webkit-text-stroke:0.3px #1a1a1a">03. RESIDENTIAL</div>
<div class="a" style="left:302px;top:329px;width:366px;height:19px;background:#e3e4e4"></div>
<div class="t" style="left:304.8px;top:333.94px;font-size:9.4px;color:#1a1a1a;font-weight:normal;transform:scaleX(0.8279);transform-origin:0 0;">RESIDENTIAL</div>
<div class="t" style="left:432.9px;top:333.94px;font-size:9.4px;color:#1a1a1a;font-weight:normal;transform:scaleX(0.9080);transform-origin:0 0;"><span style="margin:0 -0.9px">1</span>2,00</div>
<div class="t" style="left:512.5px;top:333.94px;font-size:9.4px;color:#1a1a1a;font-weight:normal;transform:scaleX(0.9477);transform-origin:0 0;">956,<span style="margin:0 -0.9px">1</span>6</div>
<div class="t" style="left:592.5px;top:333.94px;font-size:9.4px;color:#1a1a1a;font-weight:normal;transform:scaleX(0.9297);transform-origin:0 0;"><span style="margin:0 -0.9px">1</span><span style="margin:0 -0.9px">1</span><span style="margin-right:-1.1px"> </span>473,92</div>
<div class="t" style="left:304.8px;top:352.94px;font-size:9.4px;color:#1a1a1a;font-weight:normal;transform:scaleX(0.8747);transform-origin:0 0;">UNIT CORNER</div>
<div class="t" style="left:432.9px;top:352.94px;font-size:9.4px;color:#1a1a1a;font-weight:normal;transform:scaleX(0.9425);transform-origin:0 0;">2,00</div>
<div class="t" style="left:512.5px;top:352.94px;font-size:9.4px;color:#1a1a1a;font-weight:normal;transform:scaleX(0.9143);transform-origin:0 0;"><span style="margin:0 -0.9px">1</span>5<span style="margin:0 -0.9px">1</span>,09</div>
<div class="t" style="left:592.5px;top:352.94px;font-size:9.4px;color:#1a1a1a;font-weight:normal;transform:scaleX(0.9477);transform-origin:0 0;">302,<span style="margin:0 -0.9px">1</span>8</div>
<div class="a" style="left:302px;top:367px;width:366px;height:20px;background:#e3e4e4"></div>
<div class="t" style="left:304.8px;top:371.94px;font-size:9.4px;color:#1a1a1a;font-weight:normal;transform:scaleX(0.9040);transform-origin:0 0;">UNIT MIDDLE</div>
<div class="t" style="left:432.9px;top:371.94px;font-size:9.4px;color:#1a1a1a;font-weight:normal;transform:scaleX(0.8921);transform-origin:0 0;"><span style="margin:0 -0.9px">1</span>,00</div>
<div class="t" style="left:512.5px;top:371.94px;font-size:9.4px;color:#1a1a1a;font-weight:normal;transform:scaleX(0.9459);transform-origin:0 0;">95,37</div>
<div class="t" style="left:592.5px;top:371.94px;font-size:9.4px;color:#1a1a1a;font-weight:normal;transform:scaleX(0.9459);transform-origin:0 0;">95,37</div>
<div class="a" style="left:302px;top:387px;width:366px;height:19px;background:#c9caca"></div>
<div class="t" style="left:592.2px;top:390.94px;font-size:9.4px;color:#1a1a1a;font-weight:normal;transform:scaleX(0.8653);transform-origin:0 0;font-style:italic">11 871,47 m²</div>
<div class="t" style="left:278px;top:257px;font-size:10.5px;color:#000;transform:rotate(-90deg) scaleX(0.95);transform-origin:0 0">50</div>
<div class="t" style="left:278px;top:420px;font-size:10.5px;color:#000;transform:rotate(-90deg) scaleX(0.95);transform-origin:0 0">100</div>
</body></html>
